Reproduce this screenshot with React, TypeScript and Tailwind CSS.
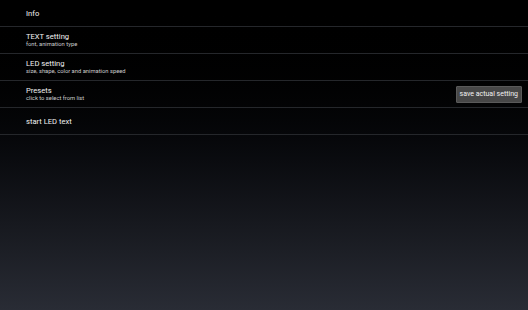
const rows: { title: string; sub?: string; action?: string }[] = [
  { title: "Info" },
  { title: "TEXT setting", sub: "font, animation type" },
  { title: "LED setting", sub: "size, shape, color and animation speed" },
  { title: "Presets", sub: "click to select from list", action: "save actual setting" },
  { title: "start LED text" },
];

export default function App() {
  return (
    <div
      className="w-[528px] h-[310px] bg-gradient-to-b from-[#000000] to-[#292c35] text-white overflow-hidden antialiased"
      style={{ fontFamily: "Roboto, 'Noto Sans', sans-serif" }}
    >
      {rows.map((row) => (
        <div
          key={row.title}
          className="h-[27px] border-b border-[#25272b] flex items-center pl-[26px] pr-[6px]"
        >
          <div className="flex-1 flex flex-col justify-center">
            <div className="text-[7.6px] leading-[9px] text-[#f2f2f2]">{row.title}</div>
            {row.sub && (
              <div className="text-[5.8px] leading-[7px] text-[#cccccc]">{row.sub}</div>
            )}
          </div>
          {row.action && (
            <button className="h-[17px] px-[3px] bg-[#474747] border border-[#5a5a5a] text-[7px] text-[#f2f2f2] rounded-[1px]">
              {row.action}
            </button>
          )}
        </div>
      ))}
    </div>
  );
}
